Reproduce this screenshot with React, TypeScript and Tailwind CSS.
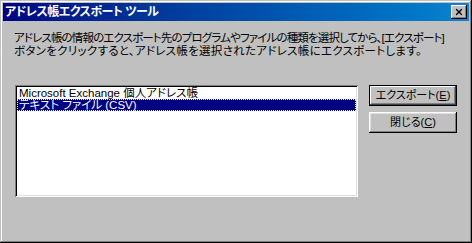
import { X } from 'lucide-react';

const uiFont = "font-['Liberation_Sans','Noto_Sans_CJK_JP',sans-serif]";

function Mnemonic({ label, keyChar }: { label: string; keyChar: string }) {
  return (
    <span>
      {label}(<span className="underline underline-offset-1">{keyChar}</span>)
    </span>
  );
}

function ClassicButton({ children, isDefault }: { children: React.ReactNode; isDefault?: boolean }) {
  return (
    <button
      className={
        'w-[88px] h-[21px] bg-[#c0c0c0] text-[11px] leading-none text-black flex items-center justify-center ' +
        (isDefault
          ? 'border border-black shadow-[inset_-1px_-1px_#404040,inset_1px_1px_#fff,inset_-2px_-2px_#808080]'
          : 'shadow-[inset_-1px_-1px_#000,inset_1px_1px_#fff,inset_-2px_-2px_#808080,inset_2px_2px_#dfdfdf]')
      }
    >
      {children}
    </button>
  );
}

export default function App() {
  const items = ['Microsoft Exchange 個人アドレス帳', 'テキスト ファイル (CSV)'];
  const selected = 1;

  return (
    <div
      className={
        'w-[472px] h-[243px] bg-[#c0c0c0] p-[3px] flex flex-col shadow-[inset_-1px_-1px_#000,inset_1px_1px_#c0c0c0,inset_-2px_-2px_#808080,inset_2px_2px_#fff] ' +
        uiFont
      }
      style={{ fontFeatureSettings: '"palt"' }}
    >
      {/* title bar */}
      <div className="h-[18px] flex items-center justify-between bg-gradient-to-r from-[#000080] to-[#1084d0] pl-[2px] pr-[2px]">
        <span className="text-white text-[12px] font-bold leading-none tracking-[-0.5px]">アドレス帳エクスポート ツール</span>
        <div className="w-[16px] h-[14px] bg-[#c0c0c0] flex items-center justify-center shadow-[inset_-1px_-1px_#000,inset_1px_1px_#fff,inset_-2px_-2px_#808080]">
          <X className="w-[10px] h-[10px] text-black" strokeWidth={3.2} />
        </div>
      </div>

      <div className="flex-1 pl-[11px] pr-[2px] pt-[11px]">
        <p className="text-[11.5px] leading-[13px] text-black whitespace-nowrap">
          <span className="block tracking-[-0.85px]">
            アドレス帳の情報のエクスポート先のプログラムやファイルの種類を選択してから、[エクスポート]
          </span>
          <span className="block tracking-[0.3px]">
            ボタンをクリックすると、アドレス帳を選択されたアドレス帳にエクスポートします。
          </span>
        </p>

        <div className="flex mt-[27px]">
          <div className="w-[343px] h-[112px] ml-px bg-white p-[2px] shadow-[inset_1px_1px_#808080,inset_-1px_-1px_#fff,inset_2px_2px_#000,inset_-2px_-2px_#dfdfdf]">
            {items.map((item, i) => (
              <div
                key={item}
                className={
                  'h-[12px] pl-[2px] text-[11.5px] leading-[12px] whitespace-nowrap ' +
                  (i === selected ? 'bg-[#000080] text-white outline-1 outline-dotted outline-[#ffff80] -outline-offset-1' : 'text-black')
                }
              >
                {item}
              </div>
            ))}
          </div>

          <div className="ml-[11px] flex flex-col gap-[6px]">
            <ClassicButton isDefault>
              <Mnemonic label="エクスポート" keyChar="E" />
            </ClassicButton>
            <ClassicButton>
              <Mnemonic label="閉じる" keyChar="C" />
            </ClassicButton>
          </div>
        </div>
      </div>
    </div>
  );
}
